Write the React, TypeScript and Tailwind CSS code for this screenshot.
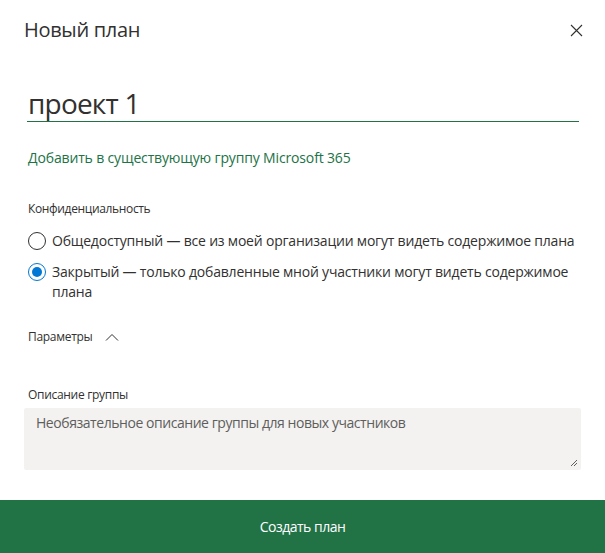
import React from "react";

export default function App() {
  return (
    <div
      className="w-[605px] h-[553px] bg-white flex flex-col text-[#323130] overflow-hidden"
      style={{ fontFamily: '"Open Sans", "Noto Sans", sans-serif' }}
    >
      <div className="h-[60px] flex items-center justify-between pl-6 pr-[17px] shrink-0">
        <div className="text-[20px] font-medium leading-none tracking-[-0.3px]">Новый план</div>
        <button className="w-6 h-6 flex items-center justify-center text-[#323130]">
          <svg width="13" height="13" viewBox="0 0 13 13">
            <path d="M1 1L12 12M12 1L1 12" stroke="#323130" strokeWidth="1.1" />
          </svg>
        </button>
      </div>

      <div className="flex-1 px-6 flex flex-col">
        <div className="mt-[21px] h-[41px] border-b border-[#217346] ml-[3px] mr-[2px] flex items-center">
          <span className="text-[28px] leading-none pl-[1px] pt-[3px] tracking-[-0.8px]">проект 1</span>
        </div>

        <div className="mt-[26px] pl-1 text-[14px] leading-5 text-[#217346] tracking-[-0.15px]">
          Добавить в существующую группу Microsoft 365
        </div>

        <div className="mt-[33px] pl-1 text-[12px] leading-4 tracking-[-0.35px]">Конфиденциальность</div>

        <div className="mt-[14px] pl-1 flex flex-col gap-[11px]">
          <label className="flex items-start gap-[6px] text-[14px] leading-5">
            <span className="mt-[1px] w-[18px] h-[18px] rounded-full border border-[#323130] shrink-0 bg-white" />
            <span className="tracking-[-0.2px]">
              Общедоступный — все из моей организации могут видеть содержимое плана
            </span>
          </label>
          <label className="flex items-start gap-[6px] text-[14px] leading-5">
            <span className="mt-[1px] w-[18px] h-[18px] rounded-full border border-[#0078d4] shrink-0 bg-white flex items-center justify-center">
              <span className="w-[10px] h-[10px] rounded-full bg-[#0078d4]" />
            </span>
            <span className="tracking-[-0.2px]">
              Закрытый — только добавленные мной участники могут видеть содержимое плана
            </span>
          </label>
        </div>

        <div className="mt-[27px] pl-1 flex items-center text-[12px] leading-4">
          <span className="tracking-[-0.3px]">Параметры</span>
          <svg className="ml-[13px]" width="14" height="8" viewBox="0 0 14 8">
            <path d="M1 7.5L7 1.5L13 7.5" fill="none" stroke="#323130" strokeWidth="1" />
          </svg>
        </div>

        <div className="mt-[42px] pl-1 text-[12px] leading-4 tracking-[-0.3px]">Описание группы</div>

        <div className="mt-[5px] relative h-[62px] bg-[#f3f2f1] rounded-[2px]">
          <div className="pl-3 pt-[5px] text-[14px] leading-5 text-[#605e5c] tracking-[-0.45px]">
            Необязательное описание группы для новых участников
          </div>
          <svg className="absolute right-[3px] bottom-[3px]" width="8" height="8" viewBox="0 0 8 8">
            <path d="M7 1L1 7M7 4L4 7" stroke="#605e5c" strokeWidth="1" />
          </svg>
        </div>
      </div>

      <button className="h-[53px] shrink-0 bg-[#217346] text-white text-[14px] tracking-[-0.5px] flex items-center justify-center">
        Создать план
      </button>
    </div>
  );
}
